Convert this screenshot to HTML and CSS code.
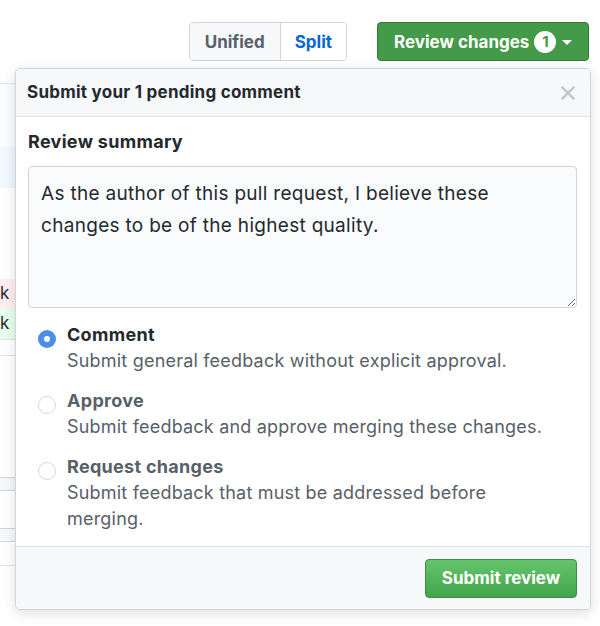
FILE: index.html
```html
<!DOCTYPE html>
<html>
<head>
<meta charset="utf-8">
<link rel="stylesheet" href="styles.css">
</head>
<body>
<div class="page">
  <div class="toolbar">
    <div class="seg">
      <button class="seg-btn">Unified</button>
      <button class="seg-btn active">Split</button>
    </div>
    <button class="btn-review">Review changes <span class="counter">1</span><span class="caret"></span></button>
  </div>
  <div class="diff">
    <div class="row r1"></div>
    <div class="row r2"></div>
    <div class="row r3"></div>
    <div class="row del">k</div>
    <div class="row add">k</div>
    <div class="row r6"></div>
    <div class="row r7"></div>
    <div class="row band"></div>
    <div class="row r9"></div>
    <div class="row band"></div>
    <div class="row r11"></div>
  </div>

  <div class="popover">
    <div class="pop-header">
      <span class="pop-title">Submit your 1 pending comment</span>
      <svg class="close" width="14" height="14" viewBox="0 0 14 14"><path d="M1.5 1.5L12.5 12.5M12.5 1.5L1.5 12.5" stroke="#c4c4c4" stroke-width="2.4" stroke-linecap="square"/></svg>
    </div>
    <div class="pop-body">
      <div class="label">Review summary</div>
      <textarea class="summary" readonly>As the author of this pull request, I believe these changes to be of the highest quality.</textarea>
      <div class="options">
        <div class="option">
          <span class="radio checked"></span>
          <div class="opt-text">
            <div class="opt-label dark">Comment</div>
            <div class="opt-desc">Submit general feedback without explicit approval.</div>
          </div>
        </div>
        <div class="option">
          <span class="radio"></span>
          <div class="opt-text">
            <div class="opt-label">Approve</div>
            <div class="opt-desc">Submit feedback and approve merging these changes.</div>
          </div>
        </div>
        <div class="option">
          <span class="radio"></span>
          <div class="opt-text">
            <div class="opt-label">Request changes</div>
            <div class="opt-desc">Submit feedback that must be addressed before merging.</div>
          </div>
        </div>
      </div>
    </div>
    <div class="pop-footer">
      <button class="btn-submit">Submit review</button>
    </div>
  </div>
</div>
</body>
</html>
```
FILE: styles.css
```css
* { box-sizing: border-box; }
html, body { margin: 0; padding: 0; background: #fff; }
body { font-family: Inter, "Noto Sans", sans-serif; color: #24292e; }
.page { position: relative; width: 600px; height: 626px; overflow: hidden; }

.toolbar {
  height: 84px;
  border-bottom: 1px solid #e1e4e8;
  display: flex;
  justify-content: flex-end;
  align-items: flex-start;
  gap: 30px;
  padding: 22px 11px 0 0;
  width: 600px;
  border-image: linear-gradient(to right, #e1e4e8 560px, transparent 560px) 1;
}
button { font-family: inherit; cursor: pointer; }
.seg { display: flex; border: 1px solid #d1d5da; border-radius: 4px; height: 39px; overflow: hidden; }
.seg-btn {
  border: 0; margin: 0; height: 37px; padding: 0 15px;
  font-size: 17px; font-weight: 700; color: #586069; background: #f6f8fa;
}
.seg-btn + .seg-btn { border-left: 1px solid #d1d5da; }
.seg-btn.active { background: #fff; color: #0366d6; padding: 0 14px; }

.btn-review {
  width: 212px; height: 39px;
  display: flex; align-items: center;
  padding: 0 0 0 16px;
  border: 1px solid #2f7a36; border-radius: 4px;
  background: #439a48; color: #fff;
  font-size: 17px; font-weight: 700;
}
.counter {
  display: inline-flex; align-items: center; justify-content: center;
  width: 22px; height: 22px; border-radius: 50%;
  background: #fff; color: #439a48; font-size: 15px; font-weight: 700;
  margin-left: 5px;
}
.caret {
  width: 0; height: 0; margin-left: 6px; margin-top: 2px;
  border-left: 5px solid transparent; border-right: 5px solid transparent; border-top: 5px solid #fff;
}

.diff { width: 560px; }
.row { font-size: 17px; line-height: 29px; padding-left: 0; color: #24292e; }
.r1 { height: 63px; background: #fafbfc; }
.r2 { height: 41px; background: #f1f8ff; }
.r3 { height: 91px; }
.del { height: 29px; background: #ffeef0; }
.add { height: 32px; background: #e6ffed; border-bottom: 1px solid #e1e4e8; line-height: 30px; }
.r6 { height: 16px; border-bottom: 1px solid #e1e4e8; }
.r7 { height: 121px; }
.band { height: 14px; background: #f6f8fa; border-top: 1px solid #d1d5da; border-bottom: 1px solid #d1d5da; }
.r9 { height: 37px; }
.r11 { height: 24px; border-bottom: 1px solid #e1e4e8; }

.popover {
  position: absolute; top: 68px; left: 15px;
  width: 576px; height: 542px;
  background: #fff;
  border: 1px solid #d1d5da; border-radius: 5px;
  box-shadow: 0 3px 12px rgba(27,31,35,0.15);
  display: flex; flex-direction: column; overflow: hidden;
}
.pop-header {
  height: 48px; flex: none;
  background: #f6f8fa; border-bottom: 1px solid #e1e4e8;
  display: flex; align-items: center; justify-content: space-between;
  padding: 0 15px 2px 11px;
}
.pop-title { font-size: 17px; font-weight: 700; letter-spacing: 0.25px; }
.close { display: block; margin-top: 2px; }

.pop-body { flex: 1; padding: 12px 13px 0 12px; }
.label { font-size: 18px; font-weight: 700; line-height: 26px; margin-bottom: 11px; letter-spacing: 0.3px; }
.summary {
  display: block; width: 100%; height: 142px; margin: 0;
  padding: 11px 12px;
  border: 1px solid #d1d5da; border-radius: 4px; background: #fafbfc;
  font-family: inherit; font-size: 19px; line-height: 32px; color: #24292e;
  letter-spacing: 0.3px;
  outline: none;
}
.options { padding: 14px 0 0 10px; display: flex; flex-direction: column; gap: 14px; }
.option { display: flex; align-items: flex-start; gap: 11px; }
.radio {
  flex: none; width: 18px; height: 18px; border-radius: 50%;
  border: 1px solid #d8d8d8; background: #fff; margin-top: 8px;
}
.radio.checked {
  border: 0; background: #4a8fe7; position: relative;
}
.radio.checked::after {
  content: ""; position: absolute; left: 6px; top: 6px;
  width: 6px; height: 6px; border-radius: 50%; background: #fff;
}
.opt-label { font-size: 18px; font-weight: 700; line-height: 26px; color: #586069; letter-spacing: 0.3px; }
.opt-label.dark { color: #24292e; }
.opt-desc { font-size: 18px; line-height: 26px; color: #586069; max-width: 485px; letter-spacing: 0.2px; }

.pop-footer {
  height: 63px; flex: none;
  background: #f6f8fa; border-top: 1px solid #e1e4e8;
  display: flex; justify-content: flex-end; align-items: center;
  padding: 0 13px 0 0;
}
.btn-submit {
  width: 152px; height: 39px;
  border: 1px solid #3b8f42; border-radius: 4px;
  background: linear-gradient(#64c56c, #43a54b);
  color: #fff; font-size: 17px; font-weight: 700;
}
```
